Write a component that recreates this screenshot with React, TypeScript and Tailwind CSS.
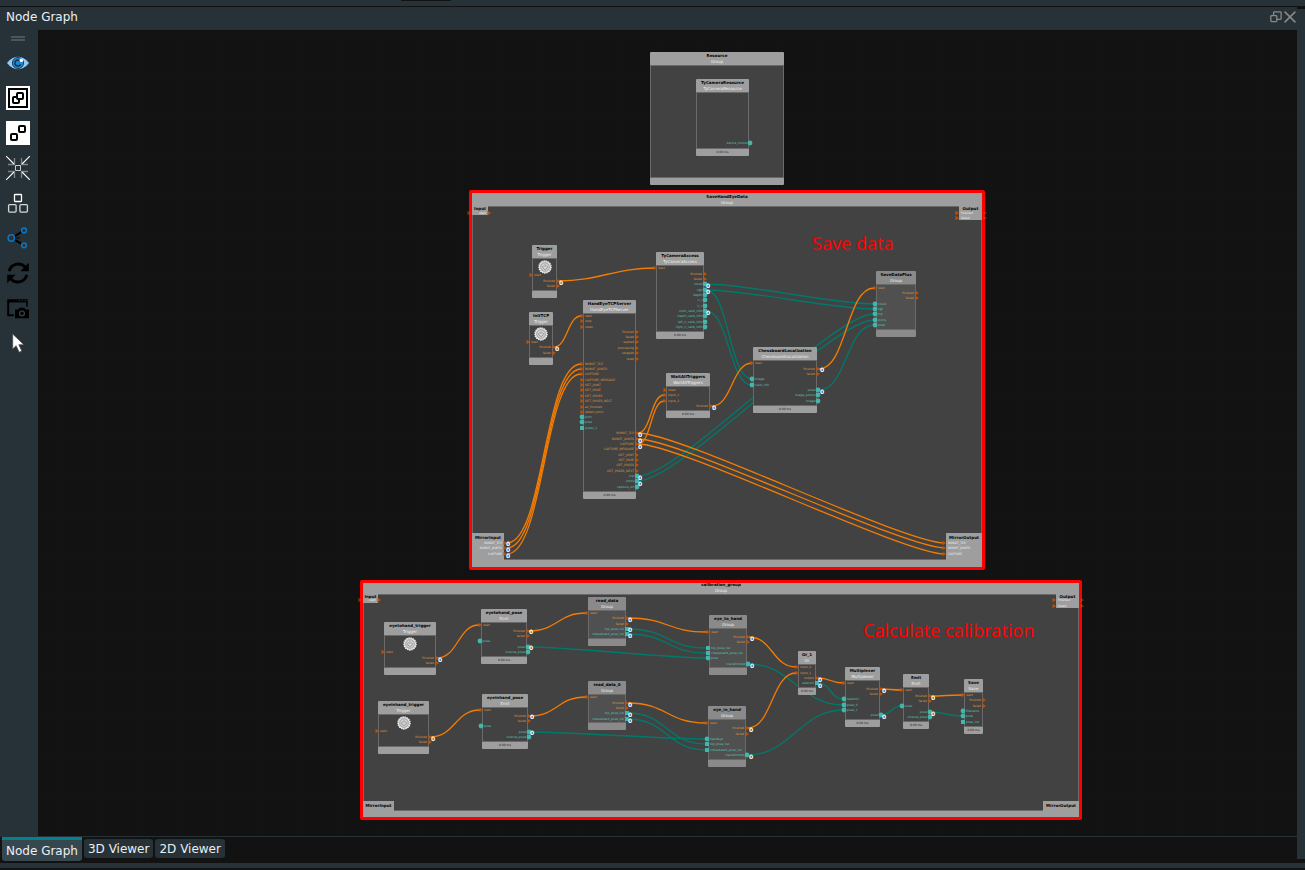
import { useState, type ReactNode } from "react";

type Kind = "trigger" | "data" | "list";
type Port = [y: number, label: string, kind?: Kind];

interface GraphNode {
  x: number;
  y: number;
  w: number;
  h: number;
  title: string;
  sub: string;
  time?: boolean;
  muted?: boolean;
  power?: boolean;
  inputs?: Port[];
  outputs?: Port[];
}

interface Terminal {
  x: number;
  y: number;
  w: number;
  h: number;
  title: string;
  tall?: boolean;
  side: "in" | "out";
  ports: Port[];
}

interface Group {
  x: number;
  y: number;
  w: number;
  h: number;
  title: string;
  framed?: boolean;
  short?: boolean;
}

const ORIGIN = { x: 38, y: 30 };

const groups: Group[] = [
  { x: 650, y: 52, w: 134, h: 133, title: "Resource" },
  { x: 469, y: 190, w: 516, h: 380, title: "SaveHandEyeData", framed: true },
  { x: 360, y: 580, w: 722, h: 240, title: "calibration_group", framed: true, short: true },
];

const terminals: Terminal[] = [
  { x: 472, y: 206, w: 16, h: 9, title: "Input", side: "in", ports: [[213, "start"]] },
  { x: 959, y: 206, w: 23, h: 14, title: "Output", side: "out", ports: [[213, "finished"], [218, "failed"]] },
  { x: 472, y: 533, w: 32, h: 27, title: "MirrorInput", tall: true, side: "in", ports: [[543, "ROBOT_TCP"], [548, "ROBOT_JOINTS"], [554, "CAPTURE"]] },
  { x: 946, y: 533, w: 36, h: 27, title: "MirrorOutput", tall: true, side: "out", ports: [[543, "ROBOT_TCP"], [548, "ROBOT_JOINTS"], [554, "CAPTURE"]] },
  { x: 363, y: 594, w: 15, h: 9, title: "Input", side: "in", ports: [[600, "start"]] },
  { x: 1056, y: 594, w: 23, h: 14, title: "Output", side: "out", ports: [[600, "finished"], [606, "failed"]] },
  { x: 363, y: 801, w: 31, h: 10, title: "MirrorInput", tall: true, side: "in", ports: [] },
  { x: 1043, y: 801, w: 36, h: 10, title: "MirrorOutput", tall: true, side: "out", ports: [] },
];

const nodes: GraphNode[] = [
  { x: 696, y: 79, w: 53, h: 77, title: "TyCameraResource", sub: "TyCameraResource", time: true, outputs: [[143, "device_online", "data"]] },
  { x: 532, y: 245, w: 25, h: 53, title: "Trigger", sub: "Trigger", power: true, inputs: [[275, "start"]], outputs: [[281, "finished"], [286, "failed"]] },
  { x: 529, y: 312, w: 24, h: 53, title: "InitTCP", sub: "Trigger", power: true, inputs: [[342, "start"]], outputs: [[347, "finished"], [353, "failed"]] },
  {
    x: 583, y: 300, w: 53, h: 199, title: "HandEyeTCPServer", sub: "HandEyeTCPServer", time: true,
    inputs: [
      [316, "start"], [321, "stop"], [327, "reset"],
      [364, "ROBOT_TCP"], [369, "ROBOT_JOINTS"], [374, "CAPTURE"], [380, "CAPTURE_MESSAGE"],
      [385, "GET_JOINT"], [390, "GET_POSE"], [396, "GET_POSES"], [401, "GET_POSES_NEXT"],
      [407, "all_finished"], [412, "detect_error"],
      [417, "joint", "data"], [422, "pose", "data"], [428, "poses_1", "list"],
    ],
    outputs: [
      [332, "finished"], [337, "failed"], [342, "started"], [348, "processing"], [353, "stopped"], [359, "reset"],
      [433, "ROBOT_TCP"], [439, "ROBOT_JOINTS"], [444, "CAPTURE"], [449, "CAPTURE_MESSAGE"],
      [455, "GET_JOINT"], [460, "GET_POSE"], [465, "GET_POSES"], [471, "GET_POSES_NEXT"],
      [476, "tcp", "data"], [481, "joints", "data"], [487, "capture_str", "data"],
    ],
  },
  {
    x: 656, y: 252, w: 48, h: 87, title: "TyCameraAccess", sub: "TyCameraAccess", time: true,
    inputs: [[268, "start"]],
    outputs: [
      [274, "finished"], [279, "failed"], [284, "cloud", "data"], [290, "rgb", "data"], [295, "depth", "data"],
      [300, "ir_l", "data"], [306, "ir_r", "data"], [311, "color_calib_info", "data"], [316, "depth_calib_info", "data"],
      [322, "left_ir_calib_info", "data"], [327, "right_ir_calib_info", "data"],
    ],
  },
  {
    x: 876, y: 271, w: 40, h: 66, title: "SaveDataPlus", sub: "Group", muted: true,
    inputs: [[288, "start"], [304, "cloud", "data"], [309, "rgb", "data"], [314, "tcp", "data"], [320, "joints", "data"], [325, "pose", "data"]],
    outputs: [[293, "finished"], [298, "failed"]],
  },
  {
    x: 666, y: 373, w: 44, h: 45, title: "WaitAllTriggers", sub: "WaitAllTriggers", time: true,
    inputs: [[390, "reset"], [395, "input_1"], [401, "input_2"]],
    outputs: [[406, "finished"]],
  },
  {
    x: 753, y: 347, w: 64, h: 66, title: "ChessboardLocalization", sub: "ChessboardLocalization", time: true,
    inputs: [[363, "start"], [379, "image", "data"], [385, "calib_info", "data"]],
    outputs: [[369, "finished"], [374, "failed"], [390, "pose", "data"], [395, "image_points", "data"], [401, "image", "data"]],
  },
  { x: 384, y: 622, w: 52, h: 53, title: "eyetohand_trigger", sub: "Trigger", power: true, inputs: [[652, "start"]], outputs: [[658, "finished"], [663, "failed"]] },
  { x: 378, y: 701, w: 51, h: 53, title: "eyeinhand_trigger", sub: "Trigger", power: true, inputs: [[731, "start"]], outputs: [[737, "finished"], [742, "failed"]] },
  {
    x: 481, y: 609, w: 46, h: 55, title: "eyetohand_pose", sub: "Emit", time: true,
    inputs: [[625, "start"], [641, "pose", "data"]],
    outputs: [[631, "finished"], [636, "failed"], [647, "pose", "data"], [652, "inverse_pose", "data"]],
  },
  {
    x: 482, y: 694, w: 46, h: 55, title: "eyeinhand_pose", sub: "Emit", time: true,
    inputs: [[710, "start"], [726, "pose", "data"]],
    outputs: [[716, "finished"], [721, "failed"], [732, "pose", "data"], [737, "inverse_pose", "data"]],
  },
  {
    x: 588, y: 597, w: 38, h: 49, title: "read_data", sub: "Group", muted: true,
    inputs: [[613, "start"]],
    outputs: [[618, "finished"], [624, "failed"], [629, "tcp_pose_list", "list"], [634, "chessboard_pose_list", "list"]],
  },
  {
    x: 588, y: 681, w: 38, h: 49, title: "read_data_0", sub: "Group", muted: true,
    inputs: [[697, "start"]],
    outputs: [[703, "finished"], [708, "failed"], [713, "tcp_pose_list", "list"], [719, "chessboard_pose_list", "list"]],
  },
  {
    x: 709, y: 615, w: 38, h: 60, title: "eye_to_hand", sub: "Group", muted: true,
    inputs: [[632, "start"], [648, "tcp_pose_list", "list"], [653, "chessboard_pose_list", "list"], [658, "pose", "data"]],
    outputs: [[637, "finished"], [642, "failed"], [664, "transformed", "data"]],
  },
  {
    x: 708, y: 706, w: 38, h: 61, title: "eye_in_hand", sub: "Group", muted: true,
    inputs: [[723, "start"], [739, "handeye", "data"], [744, "tcp_pose_list", "list"], [750, "chessboard_pose_list", "list"]],
    outputs: [[728, "finished"], [734, "failed"], [755, "transformed", "data"]],
  },
  {
    x: 798, y: 651, w: 18, h: 44, title: "Or_1", sub: "Or", time: true,
    inputs: [[667, "input_0"], [673, "input_1"]],
    outputs: [[678, "output"], [683, "selector", "list"]],
  },
  {
    x: 845, y: 667, w: 35, h: 60, title: "Multiplexer", sub: "Multiplexer", time: true,
    inputs: [[683, "start"], [699, "selector", "data"], [705, "pose_0", "data"], [710, "pose_1", "data"]],
    outputs: [[689, "finished"], [694, "failed"], [715, "pose", "data"]],
  },
  {
    x: 903, y: 674, w: 26, h: 55, title: "Emit", sub: "Emit", time: true,
    inputs: [[690, "start"], [706, "pose", "data"]],
    outputs: [[696, "finished"], [701, "failed"], [712, "pose", "data"], [717, "inverse_pose", "data"]],
  },
  {
    x: 964, y: 679, w: 19, h: 55, title: "Save", sub: "Save", time: true,
    inputs: [[695, "start"], [711, "filename", "data"], [716, "pose", "data"], [722, "pose_list", "list"]],
    outputs: [[700, "finished"], [706, "failed"]],
  },
];

type Wire = [x1: number, y1: number, x2: number, y2: number];

const triggerWires: Wire[] = [
  [558, 281, 655, 268],
  [554, 347, 581, 316],
  [507, 543, 581, 364],
  [507, 548, 581, 369],
  [507, 554, 581, 374],
  [638, 433, 664, 395],
  [638, 444, 664, 401],
  [638, 433, 945, 543],
  [638, 439, 945, 548],
  [638, 444, 945, 554],
  [712, 406, 752, 363],
  [819, 369, 874, 288],
  [437, 658, 479, 625],
  [430, 737, 480, 710],
  [529, 631, 586, 613],
  [529, 716, 586, 697],
  [628, 618, 707, 632],
  [628, 703, 706, 723],
  [749, 637, 796, 667],
  [748, 728, 796, 673],
  [818, 678, 843, 683],
  [881, 689, 901, 690],
  [930, 696, 962, 695],
];

const dataWires: Wire[] = [
  [706, 284, 874, 304],
  [706, 290, 874, 309],
  [706, 290, 752, 379],
  [706, 311, 752, 385],
  [638, 476, 874, 314],
  [638, 481, 874, 320],
  [819, 390, 874, 325],
  [529, 647, 707, 658],
  [529, 732, 706, 739],
  [628, 629, 707, 648],
  [628, 634, 707, 653],
  [628, 713, 706, 744],
  [628, 719, 706, 750],
  [749, 664, 843, 705],
  [748, 755, 843, 710],
  [818, 683, 843, 699],
  [881, 715, 901, 706],
  [930, 712, 962, 716],
];

const counters: [number, number][] = [
  [561, 284], [557, 350], [708, 287], [708, 293], [708, 314], [714, 409], [822, 371], [822, 393],
  [640, 436], [640, 442], [640, 448], [640, 479], [640, 485], [508, 545], [508, 551], [508, 557],
  [440, 661], [433, 740], [531, 633], [531, 649], [532, 718], [532, 734],
  [630, 621], [630, 631], [630, 637], [630, 706], [630, 716], [630, 722],
  [752, 640], [752, 667], [751, 731], [751, 758], [820, 681], [820, 687],
  [884, 692], [884, 718], [933, 699], [933, 715],
];

const edgeMarks: [number, number][] = [
  [469, 213], [985, 213], [985, 218], [360, 600], [1082, 600], [1082, 606],
];

const place = (x: number, y: number, w?: number, h?: number) => ({
  left: x - ORIGIN.x,
  top: y - ORIGIN.y,
  width: w,
  height: h,
});

function wirePath([x1, y1, x2, y2]: Wire) {
  const c = Math.min((x2 - x1) / 2, 42);
  return `M${x1} ${y1} C${x1 + c} ${y1} ${x2 - c} ${y2} ${x2} ${y2}`;
}

function PortLabel({ top, side, color, children }: { top: number; side: "left" | "right"; color: string; children: ReactNode }) {
  return (
    <span
      className={`absolute text-[3px] leading-[4px] whitespace-nowrap ${side === "left" ? "left-[2px]" : "right-[2px]"} ${color}`}
      style={{ top }}
    >
      {children}
    </span>
  );
}

const labelColor = (kind?: Kind) => (kind && kind !== "trigger" ? "text-[#5cc4b9]" : "text-[#dd9a45]");

function Heading({ title, sub, short }: { title: string; sub: string; short?: boolean }) {
  return (
    <div className={`flex shrink-0 flex-col items-center justify-end text-[4px] whitespace-nowrap ${short ? "h-[11px]" : "h-[13px]"}`}>
      <span className="leading-[7px] font-bold text-black">{title}</span>
      <span className="leading-[6px] text-[#f0f0f0]">{sub}</span>
    </div>
  );
}

function GroupBox({ group }: { group: Group }) {
  return (
    <section
      className={`absolute flex flex-col bg-[#9e9e9e] ${group.framed ? "rounded-xs border-3 border-[#ff0000]" : "rounded-[1px]"}`}
      style={place(group.x, group.y, group.w, group.h)}
    >
      <Heading title={group.title} sub="Group" short={group.short} />
      <div className="flex-1 border border-[#6a6a6a] bg-[#424242]" />
      <div className={group.short ? "h-[6px]" : "h-[7px]"} />
    </section>
  );
}

function TerminalBox({ item }: { item: Terminal }) {
  return (
    <div
      className="absolute flex flex-col items-center bg-[#9e9e9e] text-[4px] whitespace-nowrap"
      style={place(item.x, item.y, item.w, item.h)}
    >
      <span className={`font-bold text-black ${item.tall ? "leading-[9px]" : "leading-[5px]"}`}>{item.title}</span>
      {item.ports.map(([y, label]) => (
        <PortLabel key={label} top={y - item.y - 2} side={item.side === "in" ? "right" : "left"} color="text-[#f0f0f0]">
          {label}
        </PortLabel>
      ))}
    </div>
  );
}

function PowerButton({ label }: { label: string }) {
  return (
    <button type="button" aria-label={label} className="mt-[1px] size-[14px]">
      <svg viewBox="0 0 14 14" className="size-full" fill="none">
        <circle cx="7" cy="7" r="6.100" fill="#d9d9d9" stroke="#f4f4f4" strokeWidth="1.200" strokeDasharray="1.400 .8" />
        <circle cx="7" cy="7" r="4.200" stroke="#858585" strokeWidth=".7" />
        <path d="M5.400 5.400a2.300 2.300 0 1 0 3.200 0M7 4.200v2.600" stroke="#777" strokeWidth=".7" />
      </svg>
    </button>
  );
}

function NodeBox({ node }: { node: GraphNode }) {
  return (
    <article
      className={`absolute flex flex-col rounded-[1px] ${node.muted ? "bg-[#8a8a8a]" : "bg-[#9e9e9e]"}`}
      style={place(node.x, node.y, node.w, node.h)}
    >
      <Heading title={node.title} sub={node.sub} />
      <div className={`flex flex-1 items-start justify-center border border-[#6a6a6a] ${node.muted ? "bg-[#505050]" : "bg-[#424242]"}`}>
        {node.power && <PowerButton label={node.title} />}
      </div>
      <div className="h-[7px] shrink-0 text-center text-[3px] leading-[7px] text-[#222]">{node.time && "0.00 ms"}</div>
      {node.inputs?.map(([y, label, kind]) => (
        <PortLabel key={`i${y}`} top={y - node.y - 2} side="left" color={labelColor(kind)}>
          {label}
        </PortLabel>
      ))}
      {node.outputs?.map(([y, label, kind]) => (
        <PortLabel key={`o${y}`} top={y - node.y - 2} side="right" color={labelColor(kind)}>
          {label}
        </PortLabel>
      ))}
    </article>
  );
}

function PortMark({ x, y, kind }: { x: number; y: number; kind?: Kind }) {
  if (kind === "data") return <circle cx={x} cy={y} r="2.400" fill="#45b5a9" />;
  if (kind === "list") return <rect x={x - 2} y={y - 2} width="4" height="4" fill="#45b5a9" />;
  return <path d={`M${x - 1.5} ${y - 2.2}L${x + 2} ${y}L${x - 1.5} ${y + 2.2}Z`} fill="#c05000" />;
}

function Canvas() {
  return (
    <main className="relative min-w-0 flex-1 overflow-hidden bg-[#121212] bg-[linear-gradient(#141414_1px,transparent_1px),linear-gradient(90deg,#141414_1px,transparent_1px)] bg-[size:40px_40px] bg-[position:19px_7px] font-['DejaVu_Sans',sans-serif] [text-rendering:geometricPrecision]">
      {groups.map((g) => (
        <GroupBox key={g.title} group={g} />
      ))}
      {terminals.map((t) => (
        <TerminalBox key={`${t.x}-${t.y}`} item={t} />
      ))}
      <svg className="pointer-events-none absolute inset-0 size-full" fill="none" strokeWidth="1.300" aria-hidden="true">
        <g transform={`translate(${-ORIGIN.x} ${-ORIGIN.y})`}>
          {dataWires.map((w) => (
            <path key={w.join()} d={wirePath(w)} stroke="#00796b" />
          ))}
          {triggerWires.map((w) => (
            <path key={w.join()} d={wirePath(w)} stroke="#f57c00" />
          ))}
        </g>
      </svg>
      {nodes.map((n) => (
        <NodeBox key={n.title} node={n} />
      ))}
      <svg className="pointer-events-none absolute inset-0 size-full" aria-hidden="true">
        <g transform={`translate(${-ORIGIN.x} ${-ORIGIN.y})`}>
          {nodes.flatMap((n) => [
            ...(n.inputs ?? []).map(([y, , kind]) => <PortMark key={`${n.title}i${y}`} x={n.x - 1} y={y} kind={kind} />),
            ...(n.outputs ?? []).map(([y, , kind]) => <PortMark key={`${n.title}o${y}`} x={n.x + n.w + 1} y={y} kind={kind} />),
          ])}
          {terminals.flatMap((t) =>
            t.ports.map(([y]) => <PortMark key={`${t.x}t${y}`} x={t.side === "in" ? t.x + t.w + 1 : t.x - 2} y={y} />),
          )}
          {edgeMarks.map(([x, y]) => (
            <g key={`${x}e${y}`} opacity=".6">
              <PortMark x={x} y={y} />
            </g>
          ))}
        </g>
      </svg>
      {counters.map(([x, y]) => (
        <span
          key={`${x}-${y}`}
          className="absolute text-center text-[6px] leading-[6px] font-bold text-white"
          style={place(x - 3, y - 3, 6, 6)}
        >
          0
        </span>
      ))}
      <p className="absolute font-['Noto_Sans',sans-serif] text-[18px] leading-6 whitespace-nowrap text-[#ff0000]" style={place(812, 232)}>
        Save data
      </p>
      <p className="absolute font-['Noto_Sans',sans-serif] text-[18px] leading-6 whitespace-nowrap text-[#ff0000]" style={place(863, 619)}>
        Calculate calibration
      </p>
    </main>
  );
}

const tools: { label: string; icon: ReactNode }[] = [
  {
    label: "Toggle visibility",
    icon: (
      <>
        <path d="M.5 12C4 7.500 8 5.300 12 5.300s8 2.200 11.500 6.700C20 16.500 16 18.700 12 18.700S4 16.500.5 12Z" fill="#90caf9" stroke="#16212a" strokeWidth=".8" />
        <circle cx="12" cy="12" r="5.600" fill="#1e88d2" stroke="#1d3447" strokeWidth=".9" />
        <path d="M14.600 10.800a3 3 0 1 0 0 2.600" stroke="#15324a" strokeWidth="1.500" />
        <circle cx="15.300" cy="9.400" r="1.800" fill="#fff" />
      </>
    ),
  },
  {
    label: "Group nodes",
    icon: (
      <>
        <path d="M0 0h24v24H0z" fill="#fff" />
        <g fill="#fff" stroke="#000" strokeWidth="2">
          <path d="M3 3h18v18H3z" />
          <rect x="7" y="11" width="6" height="6" rx="1" />
          <rect x="11" y="7" width="6" height="6" rx="1" />
        </g>
      </>
    ),
  },
  {
    label: "Ungroup nodes",
    icon: (
      <>
        <path d="M0 0h24v24H0z" fill="#fff" />
        <g stroke="#000" strokeWidth="2">
          <rect x="5" y="13" width="6" height="6" rx="1" />
          <rect x="13" y="5" width="6" height="6" rx="1" />
        </g>
      </>
    ),
  },
  {
    label: "Collapse",
    icon: (
      <>
        <path d="M8.500 2v6.500H2M15.500 2v6.500H22M8.500 22v-6.500H2M15.500 22v-6.500H22" stroke="#7d878c" strokeWidth="1.300" />
        <path d="M0 0l8 8M24 0l-8 8M0 24l8-8M24 24l-8-8" stroke="#fff" strokeWidth="1.100" />
        <path d="M9.500 9.500h5v5h-5z" stroke="#c9cdcf" />
      </>
    ),
  },
  {
    label: "Arrange nodes",
    icon: (
      <g stroke="#d5d8da" strokeWidth="1.300">
        <rect x="8.500" y="3.500" width="7" height="7" rx=".5" stroke="#fff" />
        <rect x="2.600" y="13.600" width="7.500" height="7.500" rx="1" />
        <rect x="13.900" y="13.600" width="7.500" height="7.500" rx="1" />
      </g>
    ),
  },
  {
    label: "Connections",
    icon: (
      <>
        <path d="M8 10.600 16 5.700M8 13.400l8 4.700" stroke="#000" strokeWidth="2" />
        <path d="M9 12h5" stroke="#000" strokeWidth="1.600" strokeDasharray="1.400 .8" />
        <g stroke="#0b76bd" strokeWidth="1.500">
          <circle cx="5.300" cy="12" r="3.200" />
          <circle cx="18" cy="4.500" r="2.400" />
          <circle cx="18" cy="19.300" r="2.400" />
        </g>
      </>
    ),
  },
  {
    label: "Refresh",
    icon: (
      <>
        <path d="M3.200 10.200A9.200 9.200 0 0 1 18.800 5.800M20.800 13.800A9.200 9.200 0 0 1 5.200 18.200" stroke="#000" strokeWidth="2.900" />
        <path d="M22.800 1.800v8.400h-8.400ZM1.200 22.200v-8.400h8.400Z" fill="#000" />
      </>
    ),
  },
  {
    label: "Screenshot",
    icon: (
      <>
        <path d="M1.200 3.200h20.500v7.600h-1.500V6.400H3.200v11.800h4.600v2H1.200Z" fill="#000" />
        <path d="M12.500 4.700h1.500M15.500 4.700H17M18.500 4.700H20" stroke="#263238" strokeWidth=".9" />
        <path d="M9 13.600h3l1.300-1.900h5l1.300 1.900H23v8.600H9Z" fill="#000" />
        <circle cx="16" cy="17.400" r="2.400" stroke="#3b464c" strokeWidth="1.200" />
      </>
    ),
  },
  {
    label: "Select",
    icon: <path d="M6.700 3v15l3.400-3.300 3.100 6.500 2.600-1.200-3-6.300h5Z" fill="#fff" stroke="#4a4745" strokeWidth=".7" />,
  },
];

function Toolbar() {
  return (
    <aside className="flex w-[38px] shrink-0 flex-col bg-[#263238] pl-[6px]">
      <div className="mt-[6px] ml-[5px] h-[5px] w-[14px] border-y-2 border-[#4a565c]" />
      <div className="mt-[10px] flex flex-col gap-[11px]">
        {tools.map((tool) => (
          <button key={tool.label} type="button" aria-label={tool.label} className="size-6">
            <svg viewBox="0 0 24 24" fill="none" className="size-6">
              {tool.icon}
            </svg>
          </button>
        ))}
      </div>
    </aside>
  );
}

const tabs = ["Node Graph", "3D Viewer", "2D Viewer"];

export default function App() {
  const [active, setActive] = useState(tabs[0]);
  return (
    <div className="flex h-screen flex-col overflow-hidden bg-[#121212] font-['DejaVu_Sans',sans-serif] text-[12px] text-[#eceff1]">
      <div className="flex h-[6px] shrink-0 bg-[#263238] pl-[401px]">
        <div className="h-px w-[50px] bg-[#121212]" />
      </div>
      <div className="mt-px flex min-h-0 flex-1">
        <div className="flex min-w-0 flex-1 flex-col">
          <header className="flex h-[23px] shrink-0 items-center justify-between bg-[#263238] pr-px pb-[3px] pl-[6px]">
            <h1 className="leading-5">Node Graph</h1>
            <div className="flex gap-[2px] text-[#8b8987]">
              <button type="button" aria-label="Float panel" className="size-3">
                <svg viewBox="0 0 12 12" fill="none" stroke="currentColor" strokeWidth="1.300" className="size-3">
                  <rect x="3.600" y=".8" width="7.500" height="7.500" rx=".8" />
                  <rect x=".8" y="4.600" width="6" height="6" rx=".8" fill="#263238" />
                </svg>
              </button>
              <button type="button" aria-label="Close panel" className="size-3">
                <svg viewBox="0 0 12 12" fill="none" stroke="currentColor" strokeWidth="1.500" className="size-3">
                  <path d="M.6.6l10.800 10.800M11.400.6.6 11.400" />
                </svg>
              </button>
            </div>
          </header>
          <div className="flex min-h-0 flex-1 border-b border-[#263238]">
            <Toolbar />
            <Canvas />
          </div>
          <nav role="tablist" className="flex h-[26px] shrink-0 items-start gap-[2px] pl-[2px]">
            {tabs.map((tab) => (
              <button
                key={tab}
                type="button"
                role="tab"
                aria-selected={tab === active}
                onClick={() => setActive(tab)}
                className={
                  tab === active
                    ? "h-6 rounded-b-[3px] border-t-3 border-[#00838f] bg-[#37474f] px-1 leading-5"
                    : "mt-[2px] h-[19px] rounded-[3px] bg-[#263238] px-1 leading-5"
                }
              >
                {tab}
              </button>
            ))}
          </nav>
        </div>
        <div className="mt-[2px] mb-1 w-2 shrink-0 bg-[#263238]" />
      </div>
      <div className="mb-[2px] h-[5px] shrink-0 bg-[#263238]" />
    </div>
  );
}
